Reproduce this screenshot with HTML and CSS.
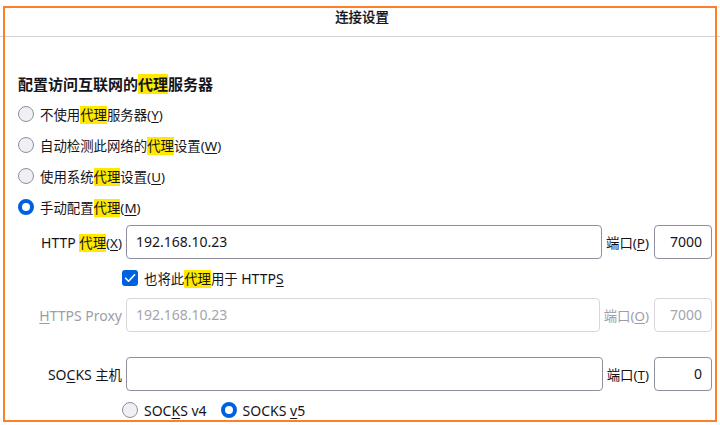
FILE: index.html
```html
<!DOCTYPE html>
<html lang="zh-CN">
<head>
<meta charset="utf-8">
<title>连接设置</title>
<link rel="stylesheet" href="styles.css">
</head>
<body>
<div class="dialog">
  <header class="titlebar">连接设置</header>
  <main class="content">
    <h2 class="section-title">配置访问互联网的<mark>代理</mark>服务器</h2>
    <div class="options">
      <div class="radio-row"><span class="radio"></span><span>不使用<mark>代理</mark>服务器(<u>Y</u>)</span></div>
      <div class="radio-row"><span class="radio"></span><span>自动检测此网络的<mark>代理</mark>设置(<u>W</u>)</span></div>
      <div class="radio-row"><span class="radio"></span><span>使用系统<mark>代理</mark>设置(<u>U</u>)</span></div>
      <div class="radio-row"><span class="radio checked"></span><span>手动配置<mark>代理</mark>(<u>M</u>)</span></div>
    </div>
    <div class="proxy">
      <div class="field-row">
        <span class="field-label"><span class="latin">HTTP</span> <mark>代理</mark>(<u>X</u>)</span>
        <span class="input">192.168.10.23</span>
        <span class="port-label">端口(<u>P</u>)</span>
        <span class="input port">7000</span>
      </div>
      <div class="check-row">
        <span class="checkbox"><svg viewBox="0 0 16 16" width="16" height="16"><path d="M3.6 8.2 L6.6 11.2 L12.6 4.8" fill="none" stroke="#fff" stroke-width="1.6" stroke-linecap="round" stroke-linejoin="round"/></svg></span>
        <span>也将此<mark>代理</mark>用于 <span class="latin">HTTP<u>S</u></span></span>
      </div>
      <div class="field-row disabled">
        <span class="field-label latin"><u>H</u>TTPS Proxy</span>
        <span class="input">192.168.10.23</span>
        <span class="port-label">端口(<u>O</u>)</span>
        <span class="input port">7000</span>
      </div>
      <div class="field-row socks">
        <span class="field-label"><span class="latin">SO<u>C</u>KS</span> 主机</span>
        <span class="input"></span>
        <span class="port-label">端口(<u>T</u>)</span>
        <span class="input port">0</span>
      </div>
      <div class="version-row">
        <span class="radio"></span><span class="version-text latin">SOC<u>K</u>S v4</span>
        <span class="radio checked"></span><span class="version-text latin">SOCKS <u>v</u>5</span>
      </div>
    </div>
  </main>
  <div class="frame"></div>
</div>
</body>
</html>
```

FILE: styles.css
```css
html, body {
  margin: 0;
  padding: 0;
  background: #ffffff;
}

body {
  font-family: "Noto Sans", "Noto Sans CJK SC", sans-serif;
  font-size: 13.4px;
  color: #15141a;
  overflow: hidden;
}

.dialog {
  position: relative;
  width: 720px;
  height: 425px;
  overflow: hidden;
}

.titlebar {
  height: 36px;
  line-height: 34px;
  text-align: center;
  border-bottom: 1px solid #d4d4d8;
  font-size: 13.4px;
  font-weight: 500;
  padding-left: 4px;
  -webkit-text-stroke: 0.2px #15141a;
}

.content {
  padding: 37px 8px 0 18px;
}

.latin {
  font-size: 14px;
}

mark {
  background: #ffe900;
  color: inherit;
}

u {
  text-decoration: underline;
  text-underline-offset: 2px;
}

.section-title {
  margin: 0 0 4px 0;
  height: 20px;
  line-height: 20px;
  font-size: 15px;
  font-weight: 700;
}

.radio-row {
  display: flex;
  align-items: center;
  gap: 6px;
  height: 31px;
}

.radio {
  box-sizing: border-box;
  width: 16px;
  height: 16px;
  flex: none;
  border-radius: 50%;
  border: 1px solid #8f8f9d;
  background: #f0f0f4;
}

.radio.checked {
  border: 4px solid #0061e0;
  background: #ffffff;
}

.options {
  margin-bottom: 3px;
}

.field-row {
  display: flex;
  align-items: center;
  height: 34px;
}

.field-label {
  width: 104px;
  flex: none;
  text-align: right;
  margin-right: 4px;
}

.input {
  box-sizing: border-box;
  flex: 1;
  height: 34px;
  line-height: 32px;
  border: 1px solid #8f8f9d;
  border-radius: 4px;
  padding: 0 9px;
  background: #fff;
  font-size: 14px;
}

.input.port {
  flex: none;
  width: 58px;
  text-align: right;
  padding-right: 9px;
}

.port-label {
  margin: 0 5px 0 4px;
}

.disabled {
  color: #9d9da6;
}

.disabled .input {
  border-color: #d7d7db;
  color: #a5a5ad;
}

.check-row {
  display: flex;
  align-items: center;
  height: 38px;
  padding-left: 104px;
  gap: 6px;
}

.checkbox {
  width: 16px;
  height: 16px;
  flex: none;
  border-radius: 3px;
  background: #0061e0;
  display: flex;
}

.field-row.disabled {
  margin-top: 1px;
}

.field-row.socks {
  margin-top: 25px;
}

.version-row {
  display: flex;
  align-items: center;
  height: 38px;
  padding-left: 104px;
}

.version-text {
  margin-left: 6px;
  margin-right: 14px;
}

.frame {
  position: absolute;
  left: 3px;
  top: 6px;
  width: 710px;
  height: 412px;
  border: 2px solid #ff7f27;
  pointer-events: none;
}
```
